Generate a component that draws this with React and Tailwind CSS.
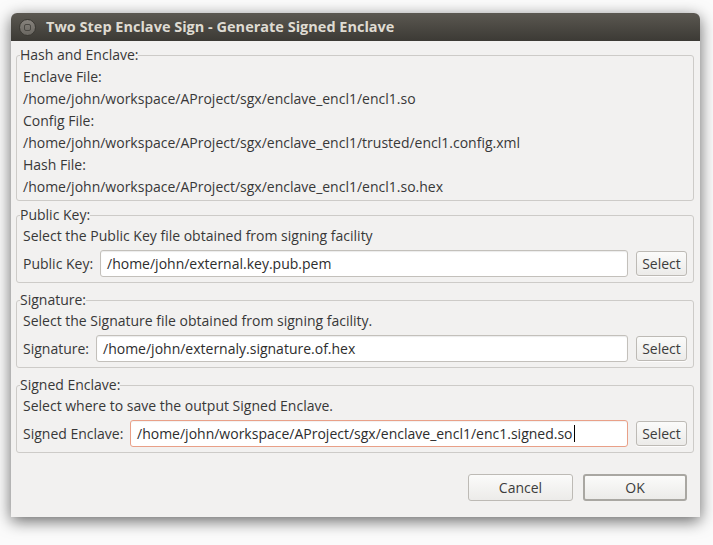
import React from 'react';

const font = { fontFamily: '"Open Sans", "DejaVu Sans", sans-serif' };

const Group = ({ title, className = '', children }) => (
  <fieldset className={`border border-[#cdcbc8] rounded-[3px] min-w-0 ${className}`}>
    <legend className="ml-[3px] px-0 h-[20px] leading-[20px]">{title}</legend>
    <div className="pl-[6px] pr-[6px]">{children}</div>
  </fieldset>
);

const FileRow = ({ label, value, inputLeft, focused }) => (
  <div className="flex items-center h-[27px] mt-[3px]">
    <span className="shrink-0" style={{ width: inputLeft }}>{label}</span>
    <div
      className={`flex-1 h-[27px] rounded-[3px] bg-white flex items-center pl-[6px] border ${
        focused
          ? 'border-[#e9a088] shadow-[inset_0_1px_1px_rgba(0,0,0,0.06)]'
          : 'border-[#c3c0bb] shadow-[inset_0_1px_1px_rgba(0,0,0,0.08)]'
      }`}
    >
      <span className="text-[#2d2d2d]">{value}</span>
      {focused && <span className="w-px h-[17px] bg-black ml-px" />}
    </div>
    <button className="ml-[8px] w-[51px] h-[25px] rounded-[3px] border border-[#bdbab5] bg-gradient-to-b from-[#fbfbfa] to-[#ecebe9] text-[#3c3c3c] shadow-[0_1px_0_rgba(255,255,255,0.8)]">
      Select
    </button>
  </div>
);

export default function App() {
  return (
    <div className="min-h-screen bg-[#fbfbfb] pt-[13px] pl-[11px] text-[14px] text-[#383838]" style={font}>
      <div className="w-[689px] h-[504px] bg-[#f2f1f0] rounded-t-[6px] shadow-[0_4px_16px_rgba(0,0,0,0.6)] flex flex-col">
        <div className="h-[28px] rounded-t-[6px] bg-gradient-to-b from-[#5b5851] to-[#3c3a35] flex items-center pl-[8px]">
          <div className="w-[17px] h-[17px] rounded-full bg-gradient-to-b from-[#86827c] to-[#6a6761] border border-[#3a3833] flex items-center justify-center">
            <div className="w-[7px] h-[7px] rounded-[2px] border border-[#4a4843]" />
          </div>
          <span className="ml-[10px] font-bold text-[#dfdbd2] text-[14.5px]">
            Two Step Enclave Sign - Generate Signed Enclave
          </span>
        </div>

        <div className="pl-[5px] pr-[6px] flex flex-col">
          <Group title="Hash and Enclave:" className="mt-[4px] pb-[2px]">
            <div className="h-[22px] leading-[22px] mt-px">Enclave File:</div>
            <div className="h-[22px] leading-[22px]">/home/john/workspace/AProject/sgx/enclave_encl1/encl1.so</div>
            <div className="h-[22px] leading-[22px]">Config File:</div>
            <div className="h-[22px] leading-[22px]">/home/john/workspace/AProject/sgx/enclave_encl1/trusted/encl1.config.xml</div>
            <div className="h-[22px] leading-[22px]">Hash File:</div>
            <div className="h-[22px] leading-[22px]">/home/john/workspace/AProject/sgx/enclave_encl1/encl1.so.hex</div>
          </Group>

          <Group title="Public Key:" className="mt-[4px] pb-[5px]">
            <div className="h-[22px] leading-[22px]">Select the Public Key file obtained from signing facility</div>
            <FileRow label="Public Key:" value="/home/john/external.key.pub.pem" inputLeft={77} />
          </Group>

          <Group title="Signature:" className="mt-[7px] pb-[5px]">
            <div className="h-[22px] leading-[22px]">Select the Signature file obtained from signing facility.</div>
            <FileRow label="Signature:" value="/home/john/externaly.signature.of.hex" inputLeft={73} />
          </Group>

          <Group title="Signed Enclave:" className="mt-[7px] pb-[5px]">
            <div className="h-[22px] leading-[22px]">Select where to save the output Signed Enclave.</div>
            <FileRow
              label="Signed Enclave:"
              value="/home/john/workspace/AProject/sgx/enclave_encl1/enc1.signed.so"
              inputLeft={107}
              focused
            />
          </Group>
        </div>

        <div className="flex justify-end gap-[10px] mt-[21px] pr-[13px]">
          <button className="w-[105px] h-[27px] rounded-[3px] border border-[#bdbab5] bg-gradient-to-b from-[#fbfbfa] to-[#ecebe9] text-[#3c3c3c]">
            Cancel
          </button>
          <button className="w-[104px] h-[27px] rounded-[3px] border-2 border-[#a9a7a2] bg-gradient-to-b from-[#fbfbfa] to-[#ecebe9] text-[#3c3c3c]">
            OK
          </button>
        </div>
      </div>
    </div>
  );
}
